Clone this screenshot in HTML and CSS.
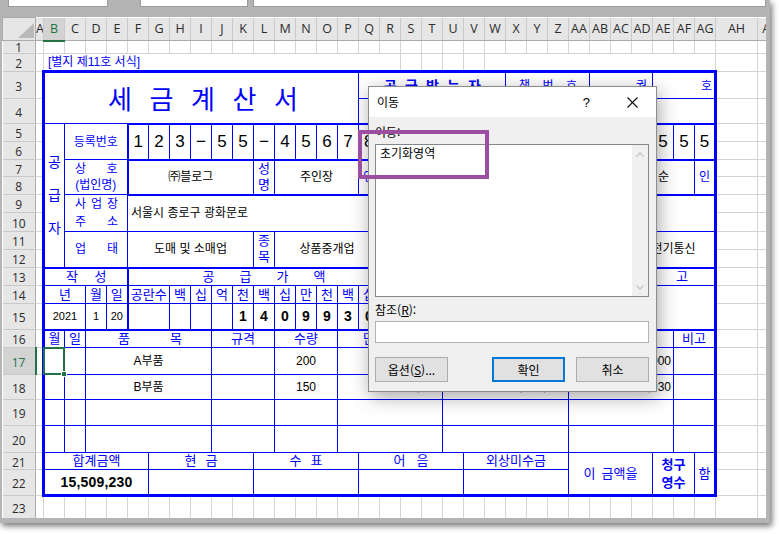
FILE: index.html
```html
<!DOCTYPE html>
<html lang="ko">
<head>
<meta charset="utf-8">
<title>세금계산서 - 이동</title>
<link rel="stylesheet" href="styles.css">
</head>
<body>
<div class="window">
  <div class="topbar">
    <div class="tbox b1"></div>
    <div class="tbox b2"></div>
    <div class="tbox b3"></div>
  </div>
  <div class="sheet">
    <table class="grid">
      <colgroup>
        <col class="w-rh"><col class="w-a"><col span="32" class="w-c"><col class="w-ah"><col class="w-ai">
      </colgroup>
      <tr class="h22">
        <th class="corner"><i class="tri"></i></th>
        <th class="ch">A</th><th class="ch csel">B</th><th class="ch">C</th><th class="ch">D</th><th class="ch">E</th><th class="ch">F</th><th class="ch">G</th><th class="ch">H</th><th class="ch">I</th><th class="ch">J</th><th class="ch">K</th><th class="ch">L</th><th class="ch">M</th><th class="ch">N</th><th class="ch">O</th><th class="ch">P</th><th class="ch">Q</th><th class="ch">R</th><th class="ch">S</th><th class="ch">T</th><th class="ch">U</th><th class="ch">V</th><th class="ch">W</th><th class="ch">X</th><th class="ch">Y</th><th class="ch">Z</th><th class="ch">AA</th><th class="ch">AB</th><th class="ch">AC</th><th class="ch">AD</th><th class="ch">AE</th><th class="ch">AF</th><th class="ch">AG</th><th class="ch">AH</th><th class="ch">AI</th>
      </tr>
      <tr class="h13">
        <th class="rh short">1</th>
        <td></td><td></td><td></td><td></td><td></td><td></td><td></td><td></td><td></td><td></td><td></td><td></td><td></td><td></td><td></td><td></td><td></td><td></td><td></td><td></td><td></td><td></td><td></td><td></td><td></td><td></td><td></td><td></td><td></td><td></td><td></td><td></td><td></td><td></td><td></td>
      </tr>
      <tr class="h18">
        <th class="rh">2</th>
        <td></td>
        <td class="note" colspan="17">[별지 제11호 서식]</td>
        <td></td><td></td><td></td><td></td>
        <td colspan="11"></td>
        <td></td><td></td>
      </tr>
      <tr class="h27">
        <th class="rh">3</th>
        <td></td>
        <td class="f T L title" colspan="15" rowspan="2"><div class="jf p62"><span>세</span><span>금</span><span>계</span><span>산</span><span>서</span></div></td>
        <td class="f T rcv" colspan="7"><div class="jf p24"><span>공</span><span>급</span><span>받</span><span>는</span><span>자</span></div></td>
        <td class="f T" colspan="4"><div class="jf p13"><span>책</span><span>번</span><span>호</span></div></td>
        <td class="f T ra5" colspan="3">권</td>
        <td class="f T R ra" colspan="3">호</td>
        <td></td><td></td>
      </tr>
      <tr class="h25">
        <th class="rh">4</th>
        <td></td>
        <td class="f" colspan="7">보 관 용</td>
        <td class="f" colspan="4">일련번호</td>
        <td class="f R" colspan="6"></td>
        <td></td><td></td>
      </tr>
      <tr class="h18">
        <th class="rh">5</th>
        <td></td>
        <td class="f L vt3" rowspan="8">공<br>급<br>자</td>
        <td class="f" colspan="3" rowspan="2">등록번호</td>
        <td class="f t l dg" rowspan="2">1</td><td class="f t dg" rowspan="2">2</td><td class="f t dg" rowspan="2">3</td><td class="f t dg" rowspan="2">&minus;</td><td class="f t dg" rowspan="2">5</td><td class="f t dg" rowspan="2">5</td><td class="f t dg" rowspan="2">&minus;</td><td class="f t dg" rowspan="2">4</td><td class="f t dg" rowspan="2">5</td><td class="f t dg" rowspan="2">6</td><td class="f t dg" rowspan="2">7</td><td class="f t r dg" rowspan="2">8</td>
        <td class="f vt5" rowspan="8">공<br>급<br>받<br>는<br>자</td>
        <td class="f" colspan="3" rowspan="2">등록번호</td>
        <td class="f t l dg" rowspan="2">3</td><td class="f t dg" rowspan="2">4</td><td class="f t dg" rowspan="2">5</td><td class="f t dg" rowspan="2">&minus;</td><td class="f t dg" rowspan="2">6</td><td class="f t dg" rowspan="2">7</td><td class="f t dg" rowspan="2">&minus;</td><td class="f t dg" rowspan="2">8</td><td class="f t dg" rowspan="2">9</td><td class="f t dg" rowspan="2">5</td><td class="f t dg" rowspan="2">5</td><td class="f t R dg" rowspan="2">5</td>
        <td></td><td></td>
      </tr>
      <tr class="h18">
        <th class="rh">6</th>
        <td></td><td></td><td></td>
      </tr>
      <tr class="h17">
        <th class="rh">7</th>
        <td></td>
        <td class="f two" colspan="3" rowspan="2"><div class="jf p10"><span>상</span><span>호</span></div><div>(법인명)</div></td>
        <td class="f t l k" colspan="6" rowspan="2">㈜블로그</td>
        <td class="f t vt2" rowspan="2">성<br>명</td>
        <td class="f t k" colspan="4" rowspan="2">주인장</td>
        <td class="f t r" rowspan="2">인</td>
        <td class="f two" colspan="3" rowspan="2"><div class="jf p10"><span>상</span><span>호</span></div><div>(법인명)</div></td>
        <td class="f t l k" colspan="6" rowspan="2">㈜한빛상사</td>
        <td class="f t vt2" rowspan="2">성<br>명</td>
        <td class="f t k" colspan="4" rowspan="2">김영순</td>
        <td class="f t R" rowspan="2">인</td>
        <td></td><td></td>
      </tr>
      <tr class="h18">
        <th class="rh">8</th>
        <td></td><td></td><td></td>
      </tr>
      <tr class="h18">
        <th class="rh">9</th>
        <td></td>
        <td class="f two2" colspan="3" rowspan="2"><div class="jf p10"><span>사</span><span>업</span><span>장</span></div><div class="jf p10"><span>주</span><span>소</span></div></td>
        <td class="f t k addr" colspan="12" rowspan="2">서울시 종로구 광화문로</td>
        <td class="f two2" colspan="3" rowspan="2"><div class="jf p10"><span>사</span><span>업</span><span>장</span></div><div class="jf p10"><span>주</span><span>소</span></div></td>
        <td class="f t R k addr" colspan="12" rowspan="2">서울시 중구 세종대로</td>
        <td></td><td></td>
      </tr>
      <tr class="h19">
        <th class="rh">10</th>
        <td></td><td></td><td></td>
      </tr>
      <tr class="h18">
        <th class="rh">11</th>
        <td></td>
        <td class="f" colspan="3" rowspan="2"><div class="jf p10"><span>업</span><span>태</span></div></td>
        <td class="f k" colspan="6" rowspan="2">도매 및 소매업</td>
        <td class="f vt2" rowspan="2">종<br>목</td>
        <td class="f k" colspan="5" rowspan="2">상품중개업</td>
        <td class="f" colspan="3" rowspan="2"><div class="jf p10"><span>업</span><span>태</span></div></td>
        <td class="f k" colspan="6" rowspan="2">서비스</td>
        <td class="f vt2" rowspan="2">종<br>목</td>
        <td class="f R k" colspan="5" rowspan="2">정보전기통신</td>
        <td></td><td></td>
      </tr>
      <tr class="h18">
        <th class="rh">12</th>
        <td></td><td></td><td></td>
      </tr>
      <tr class="h18 m13">
        <th class="rh">13</th>
        <td></td>
        <td class="f t L" colspan="4"><div class="jf p21"><span>작</span><span>성</span></div></td>
        <td class="f t l" colspan="13"><div class="jf p74"><span>공</span><span>급</span><span>가</span><span>액</span></div></td>
        <td class="f t l" colspan="10"><div class="jf p60"><span>세</span><span>액</span></div></td>
        <td class="f t l R" colspan="5"><div class="jf p26"><span>비</span><span>고</span></div></td>
        <td></td><td></td>
      </tr>
      <tr class="h18 m13">
        <th class="rh">14</th>
        <td></td>
        <td class="f L" colspan="2">년</td><td class="f">월</td><td class="f">일</td>
        <td class="f l" colspan="2">공란수</td>
        <td class="f">백</td><td class="f">십</td><td class="f">억</td><td class="f">천</td><td class="f">백</td><td class="f">십</td><td class="f">만</td><td class="f">천</td><td class="f">백</td><td class="f">십</td><td class="f">일</td>
        <td class="f l">십</td><td class="f">억</td><td class="f">천</td><td class="f">백</td><td class="f">십</td><td class="f">만</td><td class="f">천</td><td class="f">백</td><td class="f">십</td><td class="f">일</td>
        <td class="f l R" colspan="5" rowspan="2"></td>
        <td></td><td></td>
      </tr>
      <tr class="h26">
        <th class="rh">15</th>
        <td></td>
        <td class="f L k s11" colspan="2">2021</td><td class="f k s11">1</td><td class="f k s11">20</td>
        <td class="f l" colspan="2"></td>
        <td class="f"></td><td class="f"></td><td class="f"></td><td class="f bd">1</td><td class="f bd">4</td><td class="f bd">0</td><td class="f bd">9</td><td class="f bd">9</td><td class="f bd">3</td><td class="f bd">0</td><td class="f bd">0</td>
        <td class="f l"></td><td class="f"></td><td class="f"></td><td class="f bd">1</td><td class="f bd">4</td><td class="f bd">0</td><td class="f bd">9</td><td class="f bd">9</td><td class="f bd">3</td><td class="f bd">0</td>
        <td></td><td></td>
      </tr>
      <tr class="h18 m13">
        <th class="rh">16</th>
        <td></td>
        <td class="f t L">월</td><td class="f t">일</td>
        <td class="f t" colspan="6"><div class="jf p31"><span>품</span><span>목</span></div></td>
        <td class="f t" colspan="3">규격</td>
        <td class="f t" colspan="3">수량</td>
        <td class="f t" colspan="5"><div class="jf p25"><span>단</span><span>가</span></div></td>
        <td class="f t" colspan="6"><div class="jf p20"><span>공</span><span>급</span><span>가</span><span>액</span></div></td>
        <td class="f t" colspan="5"><div class="jf p25"><span>세</span><span>액</span></div></td>
        <td class="f t R" colspan="2">비고</td>
        <td></td><td></td>
      </tr>
      <tr class="h27">
        <th class="rh rsel">17</th>
        <td></td>
        <td class="f L selc"><div class="selbox"><i class="handle"></i></div></td>
        <td class="f"></td>
        <td class="f k" colspan="6">A부품</td>
        <td class="f" colspan="3"></td>
        <td class="f k" colspan="3">200</td>
        <td class="f k ra" colspan="5">35,000</td>
        <td class="f k ra" colspan="6">7,000,000</td>
        <td class="f k ra" colspan="5">700,000</td>
        <td class="f R" colspan="2"></td>
        <td></td><td></td>
      </tr>
      <tr class="h25">
        <th class="rh">18</th>
        <td></td>
        <td class="f L"></td>
        <td class="f"></td>
        <td class="f k" colspan="6">B부품</td>
        <td class="f" colspan="3"></td>
        <td class="f k" colspan="3">150</td>
        <td class="f k ra" colspan="5">47,062</td>
        <td class="f k ra" colspan="6">7,099,300</td>
        <td class="f k ra" colspan="5">709,930</td>
        <td class="f R" colspan="2"></td>
        <td></td><td></td>
      </tr>
      <tr class="h26">
        <th class="rh">19</th>
        <td></td>
        <td class="f L"></td><td class="f"></td><td class="f" colspan="6"></td><td class="f" colspan="3"></td><td class="f" colspan="3"></td><td class="f" colspan="5"></td><td class="f" colspan="6"></td><td class="f" colspan="5"></td><td class="f R" colspan="2"></td>
        <td></td><td></td>
      </tr>
      <tr class="h27">
        <th class="rh">20</th>
        <td></td>
        <td class="f L"></td><td class="f"></td><td class="f" colspan="6"></td><td class="f" colspan="3"></td><td class="f" colspan="3"></td><td class="f" colspan="5"></td><td class="f" colspan="6"></td><td class="f" colspan="5"></td><td class="f R" colspan="2"></td>
        <td></td><td></td>
      </tr>
      <tr class="h17 m13">
        <th class="rh">21</th>
        <td></td>
        <td class="f L" colspan="5">합계금액</td>
        <td class="f" colspan="5"><div class="gp g9"><span>현</span><span>금</span></div></td>
        <td class="f" colspan="5"><div class="gp g9"><span>수</span><span>표</span></div></td>
        <td class="f" colspan="5"><div class="gp g11"><span>어</span><span>음</span></div></td>
        <td class="f" colspan="5">외상미수금</td>
        <td class="f B" colspan="4" rowspan="2"><div class="gp g6"><span>이</span><span>금액을</span></div></td>
        <td class="f B bq" colspan="2" rowspan="2">청구<br>영수</td>
        <td class="f B R" rowspan="2">함</td>
        <td></td><td></td>
      </tr>
      <tr class="h26">
        <th class="rh">22</th>
        <td></td>
        <td class="f L B k tot" colspan="5">15,509,230</td>
        <td class="f B" colspan="5"></td>
        <td class="f B" colspan="5"></td>
        <td class="f B" colspan="5"></td>
        <td class="f B" colspan="5"></td>
        <td></td><td></td>
      </tr>
      <tr class="h24">
        <th class="rh">23</th>
        <td></td><td></td><td></td><td></td><td></td><td></td><td></td><td></td><td></td><td></td><td></td><td></td><td></td><td></td><td></td><td></td><td></td><td></td><td></td><td></td><td></td><td></td><td></td><td></td><td></td><td></td><td></td><td></td><td></td><td></td><td></td><td></td><td></td><td></td><td></td>
      </tr>
    </table>
  </div>

  <div class="dialog">
    <div class="dlg-title">
      <span class="dlg-name">이동</span>
      <span class="dlg-help">?</span>
      <svg class="dlg-close" width="11" height="11" viewBox="0 0 11 11"><path d="M0.5 0.5L10.5 10.5M10.5 0.5L0.5 10.5" stroke="#111" stroke-width="1.1" fill="none"/></svg>
    </div>
    <div class="dlg-body">
      <div class="dlg-lbl first">이동:</div>
      <div class="listbox">
        <div class="items"><div class="item">초기화영역</div></div>
        <div class="vscroll">
          <svg width="8" height="5" viewBox="0 0 8 5"><polyline points="0.5,4.5 4,1 7.5,4.5" fill="none" stroke="#c4c4c4" stroke-width="1.3"/></svg>
          <svg width="8" height="5" viewBox="0 0 8 5"><polyline points="0.5,0.5 4,4 7.5,0.5" fill="none" stroke="#c4c4c4" stroke-width="1.3"/></svg>
        </div>
      </div>
      <div class="dlg-lbl ref">참조(<u>R</u>):</div>
      <div class="input"></div>
      <div class="btns">
        <div class="btn">옵션(<u>S</u>)...</div>
        <div class="btn primary">확인</div>
        <div class="btn">취소</div>
      </div>
    </div>
  </div>
  <div class="callout"></div>
</div>
</body>
</html>
```

FILE: styles.css
```css
* { box-sizing: border-box; }
html, body { margin: 0; padding: 0; background: #fff; }
body { width: 779px; height: 534px; overflow: hidden; }

.window {
  position: relative;
  width: 770px;
  height: 523px;
  background: #b4b4b4;
  box-shadow: 2px 3px 6px rgba(0, 0, 0, 0.55);
}

.topbar { height: 17px; display: flex; }
.tbox { height: 7px; background: #fff; border: 1px solid #9a9a9a; border-top: 0; }
.b1 { margin-left: 8px; width: 100px; }
.b2 { margin-left: 32px; width: 108px; }
.b3 { margin-left: 5px; flex: 1; margin-right: 4px; }

.sheet {
  margin-left: 2px;
  width: 764px;
  height: 501px;
  overflow: hidden;
  background: #fff;
}

.grid {
  border-collapse: collapse;
  table-layout: fixed;
  width: 776px;
  font-family: "Liberation Sans", "Noto Sans CJK KR", sans-serif;
}
.w-rh { width: 33px; }
.w-a { width: 8px; }
.w-c { width: 21px; }
.w-ah { width: 42px; }
.w-ai { width: 21px; }

.h13 { height: 13px; }
.h17 { height: 17px; }
.h18 { height: 18px; }
.h19 { height: 19px; }
.h22 { height: 22px; }
.h24 { height: 24px; }
.h25 { height: 25px; }
.h26 { height: 26px; }
.h27 { height: 27px; }

.grid td {
  border: 1px solid #d4d4d4;
  padding: 0;
  font-size: 12px;
  line-height: 14px;
  white-space: nowrap;
  overflow: hidden;
  text-align: center;
  vertical-align: middle;
}

/* headers */
.grid th {
  padding: 0;
  background: #e6e6e6;
  font-family: "Open Sans", "Noto Sans", sans-serif;
  font-weight: normal;
  color: #2b2b2b;
  white-space: nowrap;
  overflow: hidden;
}
.corner {
  border: 1px solid #ababab;
  text-align: right;
  vertical-align: bottom;
}
.tri {
  display: inline-block;
  width: 0;
  height: 0;
  border-left: 16px solid transparent;
  border-bottom: 15px solid #b9b9b9;
  margin: 0 1px 2px 0;
  vertical-align: bottom;
}
.ch {
  font-size: 12.5px;
  line-height: 14px;
  border-left: 1px solid #c9c9c9;
  border-right: 1px solid #c9c9c9;
  border-bottom: 1px solid #ababab;
  text-align: center;
  vertical-align: middle;
}
.ch.csel {
  background: #d3d3d3;
  color: #217346;
  border-bottom: 2px solid #217346;
}
.rh {
  font-size: 12px;
  line-height: 12px;
  padding-top: 3px !important;
  border-top: 1px solid #c9c9c9;
  border-bottom: 1px solid #c9c9c9;
  border-right: 1px solid #ababab;
  text-align: center;
  vertical-align: middle;
}
.rh.short { padding-top: 0 !important; line-height: 11px; }
.rh.rsel {
  background: #d3d3d3;
  color: #217346;
  border-right: 2px solid #217346;
}

/* sheet text */
.grid td.note {
  text-align: left;
  padding-left: 4px;
  color: #0000ff;
  font-size: 12px;
  overflow: visible;
}

/* form cells */
.grid td.f {
  border: 1px solid #0000ff;
  color: #0000ff;
}
.grid td.T { border-top: 3px solid #0000ff; }
.grid td.B { border-bottom: 3px solid #0000ff; }
.grid td.L { border-left: 3px solid #0000ff; }
.grid td.R { border-right: 3px solid #0000ff; }
.grid td.t { border-top-width: 2px; }
.grid td.l { border-left-width: 2px; }
.grid td.r { border-right-width: 2px; }

.grid td.k { color: #000; }
.grid td.dg { color: #000; font-size: 17px; line-height: 18px; }
.grid td.bd { color: #000; font-size: 14px; font-weight: bold; }
.grid td.s11 { font-size: 11px; }
.grid td.tot { font-size: 14px; font-weight: bold; letter-spacing: 0.2px; }
.grid td.ra { text-align: right; padding-right: 2px; }
.grid td.ra5 { text-align: right; padding-right: 5px; }
.grid td.addr { text-align: left; padding-left: 3px; }
.m13 td { font-size: 13px; }

.jf { display: flex; justify-content: space-between; }
.p10 { padding: 0 9px 0 10px; }
.p13 { padding: 0 12px 0 13px; }
.p20 { padding: 0 20px; }
.p21 { padding: 0 20px 0 21px; }
.p24 { padding: 0 24px 0 25px; }
.p25 { padding: 0 25px; }
.p26 { padding: 0 26px; }
.p31 { padding: 0 29px 0 32px; }
.p60 { padding: 0 60px; }
.p62 { padding: 0 60px 0 63px; }
.p74 { padding: 0 74px 0 74px; }

.gp { display: flex; justify-content: center; }
.g6 { gap: 6px; }
.g9 { gap: 9px; }
.g11 { gap: 11px; }

.grid td.title {
  font-size: 26px;
  line-height: 30px;
  font-family: "Noto Sans CJK KR", sans-serif;
}
.grid td.rcv {
  font-size: 14px;
  line-height: 18px;
  font-weight: bold;
}
.grid td.two { line-height: 16px; }
.grid td.two2 { line-height: 18px; }
.grid td.vt2 { font-size: 13px; line-height: 16px; }
.grid td.vt3 { font-size: 14px; line-height: 33px; }
.grid td.vt5 { font-size: 13px; line-height: 26px; }
.grid td.bq { font-size: 13px; line-height: 18px; font-weight: bold; }

/* selection */
.grid td.selc { position: relative; overflow: visible; }
.selbox {
  position: absolute;
  left: -2px;
  top: -1px;
  right: -1px;
  bottom: -1px;
  border: 2px solid #217346;
}
.handle {
  position: absolute;
  right: -4px;
  bottom: -4px;
  width: 6px;
  height: 6px;
  background: #217346;
  border: 1px solid #fff;
}

/* dialog */
.dialog {
  position: absolute;
  left: 368px;
  top: 86px;
  width: 289px;
  height: 306px;
  background: #f0f0f0;
  border: 1px solid #8c8c8c;
  box-shadow: 2px 5px 18px rgba(0, 0, 0, 0.35);
  font-family: "Noto Sans CJK KR", sans-serif;
  font-size: 12px;
  color: #000;
  z-index: 5;
  display: flex;
  flex-direction: column;
}
.dlg-title {
  height: 30px;
  background: #fff;
  display: flex;
  align-items: center;
  padding-left: 8px;
}
.dlg-name { flex: 1; line-height: 16px; }
.dlg-help { font-family: "Liberation Sans", sans-serif; font-size: 13px; margin-right: 37px; }
.dlg-close { margin-right: 18px; }
.dlg-body { padding: 0 7px 0 6px; display: flex; flex-direction: column; }
.dlg-lbl { line-height: 16px; }
.dlg-lbl.first { margin-top: 7px; }
.dlg-lbl.ref { margin-top: 5px; }
.listbox {
  margin-top: 4px;
  height: 153px;
  background: #fff;
  border: 1px solid #828790;
  display: flex;
}
.items { flex: 1; padding: 0 4px; }
.item { line-height: 15px; }
.vscroll {
  width: 16px;
  background: #f0f0f0;
  display: flex;
  flex-direction: column;
  align-items: center;
  justify-content: space-between;
  padding: 7px 0 6px;
}
.input {
  margin-top: 3px;
  height: 22px;
  background: #fff;
  border: 1px solid #b4b4b4;
}
.btns { margin-top: 14px; display: flex; }
.btn {
  width: 73px;
  height: 25px;
  background: #e1e1e1;
  border: 1px solid #adadad;
  display: flex;
  align-items: center;
  justify-content: center;
}
.btn.primary { border: 2px solid #0078d7; margin-left: auto; margin-right: 11px; }

.callout {
  position: absolute;
  left: 358px;
  top: 130px;
  width: 131px;
  height: 49px;
  border: 4px solid #9c4fa0;
  z-index: 6;
}
```
